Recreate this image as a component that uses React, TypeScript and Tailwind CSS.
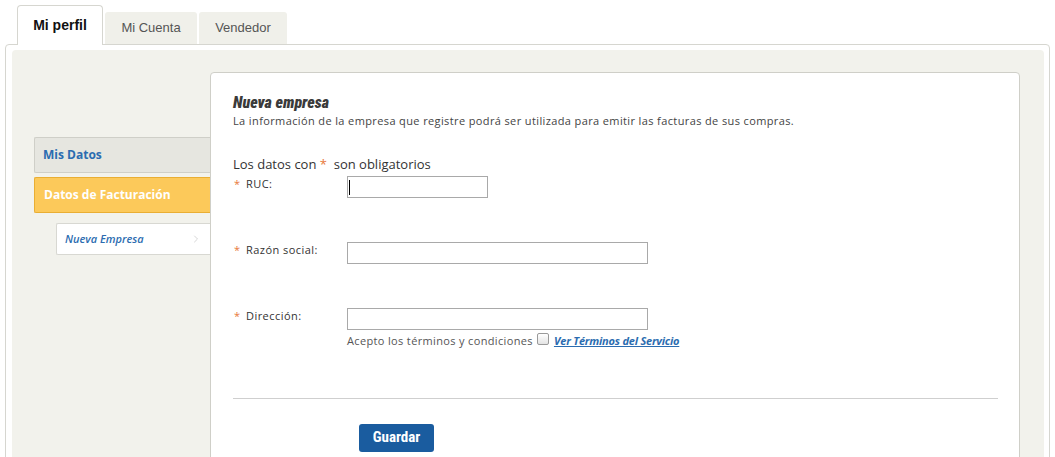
import { ChevronRight } from "lucide-react";

const sans = "font-['Open_Sans','DejaVu_Sans',sans-serif]";
const arial = "font-['Liberation_Sans',Arial,sans-serif]";
const narrow = "font-['Liberation_Sans_Narrow','Roboto_Condensed',Roboto,sans-serif]";

interface FieldProps {
  label: string;
  width: string;
  focused?: boolean;
}

const Field: React.FC<FieldProps> = ({ label, width, focused }) => (
  <div className="flex items-start">
    <div className="w-[114px] flex items-start pt-[1px] text-[11px] text-[#333] tracking-[0.45px]">
      <span className="text-[#e8773a] w-[13px] pl-[1px] leading-[14px]">*</span>
      <span className="leading-[14px]">{label}</span>
    </div>
    <div className={`${width} h-[22px] border border-[#a9a9a9] bg-white flex items-center px-[1px]`}>
      {focused && <span className="w-[1px] h-[15px] bg-black" />}
    </div>
  </div>
);

export default function App() {
  return (
    <div className={`h-[457px] w-[1055px] overflow-hidden bg-white ${sans}`}>
      {/* tabs */}
      <div className={`flex items-end pl-[17px] pt-[5px] ${arial}`}>
        <div className="relative z-10 w-[86px] h-[40px] -mb-[1px] bg-white border border-b-0 border-[#d6d6d0] rounded-t-[4px] flex items-center justify-center text-[14px] font-bold text-[#111]">
          Mi perfil
        </div>
        <div className="ml-[2px] w-[92px] h-[32px] bg-[#f0f0ea] rounded-t-[3px] flex items-center justify-center text-[13px] text-[#555]">
          Mi Cuenta
        </div>
        <div className="ml-[2px] w-[88px] h-[32px] bg-[#f0f0ea] rounded-t-[3px] flex items-center justify-center text-[13px] text-[#555]">
          Vendedor
        </div>
      </div>

      {/* panel */}
      <div className="ml-[5px] w-[1045px] h-[500px] border border-[#d6d6d0] rounded-[4px] bg-white pt-[5px] pl-[6px] pr-[5px]">
        <div className="h-full bg-[#f2f2ec] rounded-[4px] flex pt-[22px]">
          {/* nav */}
          <div className="w-[198px] shrink-0 pt-[65px] pl-[22px]">
            <div className="h-[36px] bg-[#e6e6e0] border border-r-0 border-[#cfcfc8] rounded-l-[2px] flex items-center pl-[8px] text-[12px] font-bold text-[#2b6cb0]">
              Mis Datos
            </div>
            <div className="mt-[4px] h-[36px] bg-[#fcc95a] border border-r-0 border-[#e9ae33] rounded-l-[2px] flex items-center pl-[9px] text-[12px] font-bold text-white">
              Datos de Facturación
            </div>
            <div className="mt-[10px] ml-[22px] h-[32px] bg-white border border-r-0 border-[#d8d8d2] rounded-l-[2px] flex items-center justify-between pl-[8px] pr-[8px] text-[11px] font-semibold italic text-[#2b6cb0]">
              <span>Nueva Empresa</span>
              <ChevronRight size={12} strokeWidth={1.5} className="text-[#c8c8c8]" />
            </div>
          </div>

          {/* card */}
          <div className="w-[810px] h-[420px] bg-white border border-[#cfcfc8] rounded-[4px] pl-[22px] pr-[21px] pt-[20px]">
            <h2 className={`text-[16px] leading-[20px] font-black italic text-[#3a3a3a] ${narrow}`}>
              Nueva empresa
            </h2>
            <p className="mt-[1px] text-[11px] leading-[14px] text-[#444] tracking-[0.38px]">
              La información de la empresa que registre podrá ser utilizada para emitir las facturas de sus compras.
            </p>

            <p className="mt-[28px] text-[13px] leading-[16px] text-[#333]">
              Los datos con <span className="text-[#e8773a]">*</span>&nbsp;&nbsp;son obligatorios
            </p>

            <div className="mt-[4px]">
              <Field label="RUC:" width="w-[141px]" focused />
            </div>
            <div className="mt-[44px]">
              <Field label="Razón social:" width="w-[301px]" />
            </div>
            <div className="mt-[44px]">
              <Field label="Dirección:" width="w-[301px]" />
            </div>
            <div className="pl-[114px] mt-[3px] flex items-center text-[11px] text-[#555]">
              <span className="tracking-[0.35px]">Acepto los términos y condiciones</span>
              <span className="ml-[4px] -mt-[5px] w-[12px] h-[12px] border border-[#9a9a9a] rounded-[2px] bg-gradient-to-b from-white to-[#e4e4e4]" />
              <a className="ml-[5px] font-bold italic underline text-[#2b6cb0] tracking-[-0.2px]">
                Ver Términos del Servicio
              </a>
            </div>

            <div className="mt-[48px] h-[1px] bg-[#cfcfcf]" />

            <div className="pl-[126px] mt-[25px]">
              <button className={`h-[28px] w-[75px] rounded-[3px] bg-[#1a5c9f] text-white text-[15px] font-bold ${narrow}`}>
                Guardar
              </button>
            </div>
          </div>
        </div>
      </div>
    </div>
  );
}
